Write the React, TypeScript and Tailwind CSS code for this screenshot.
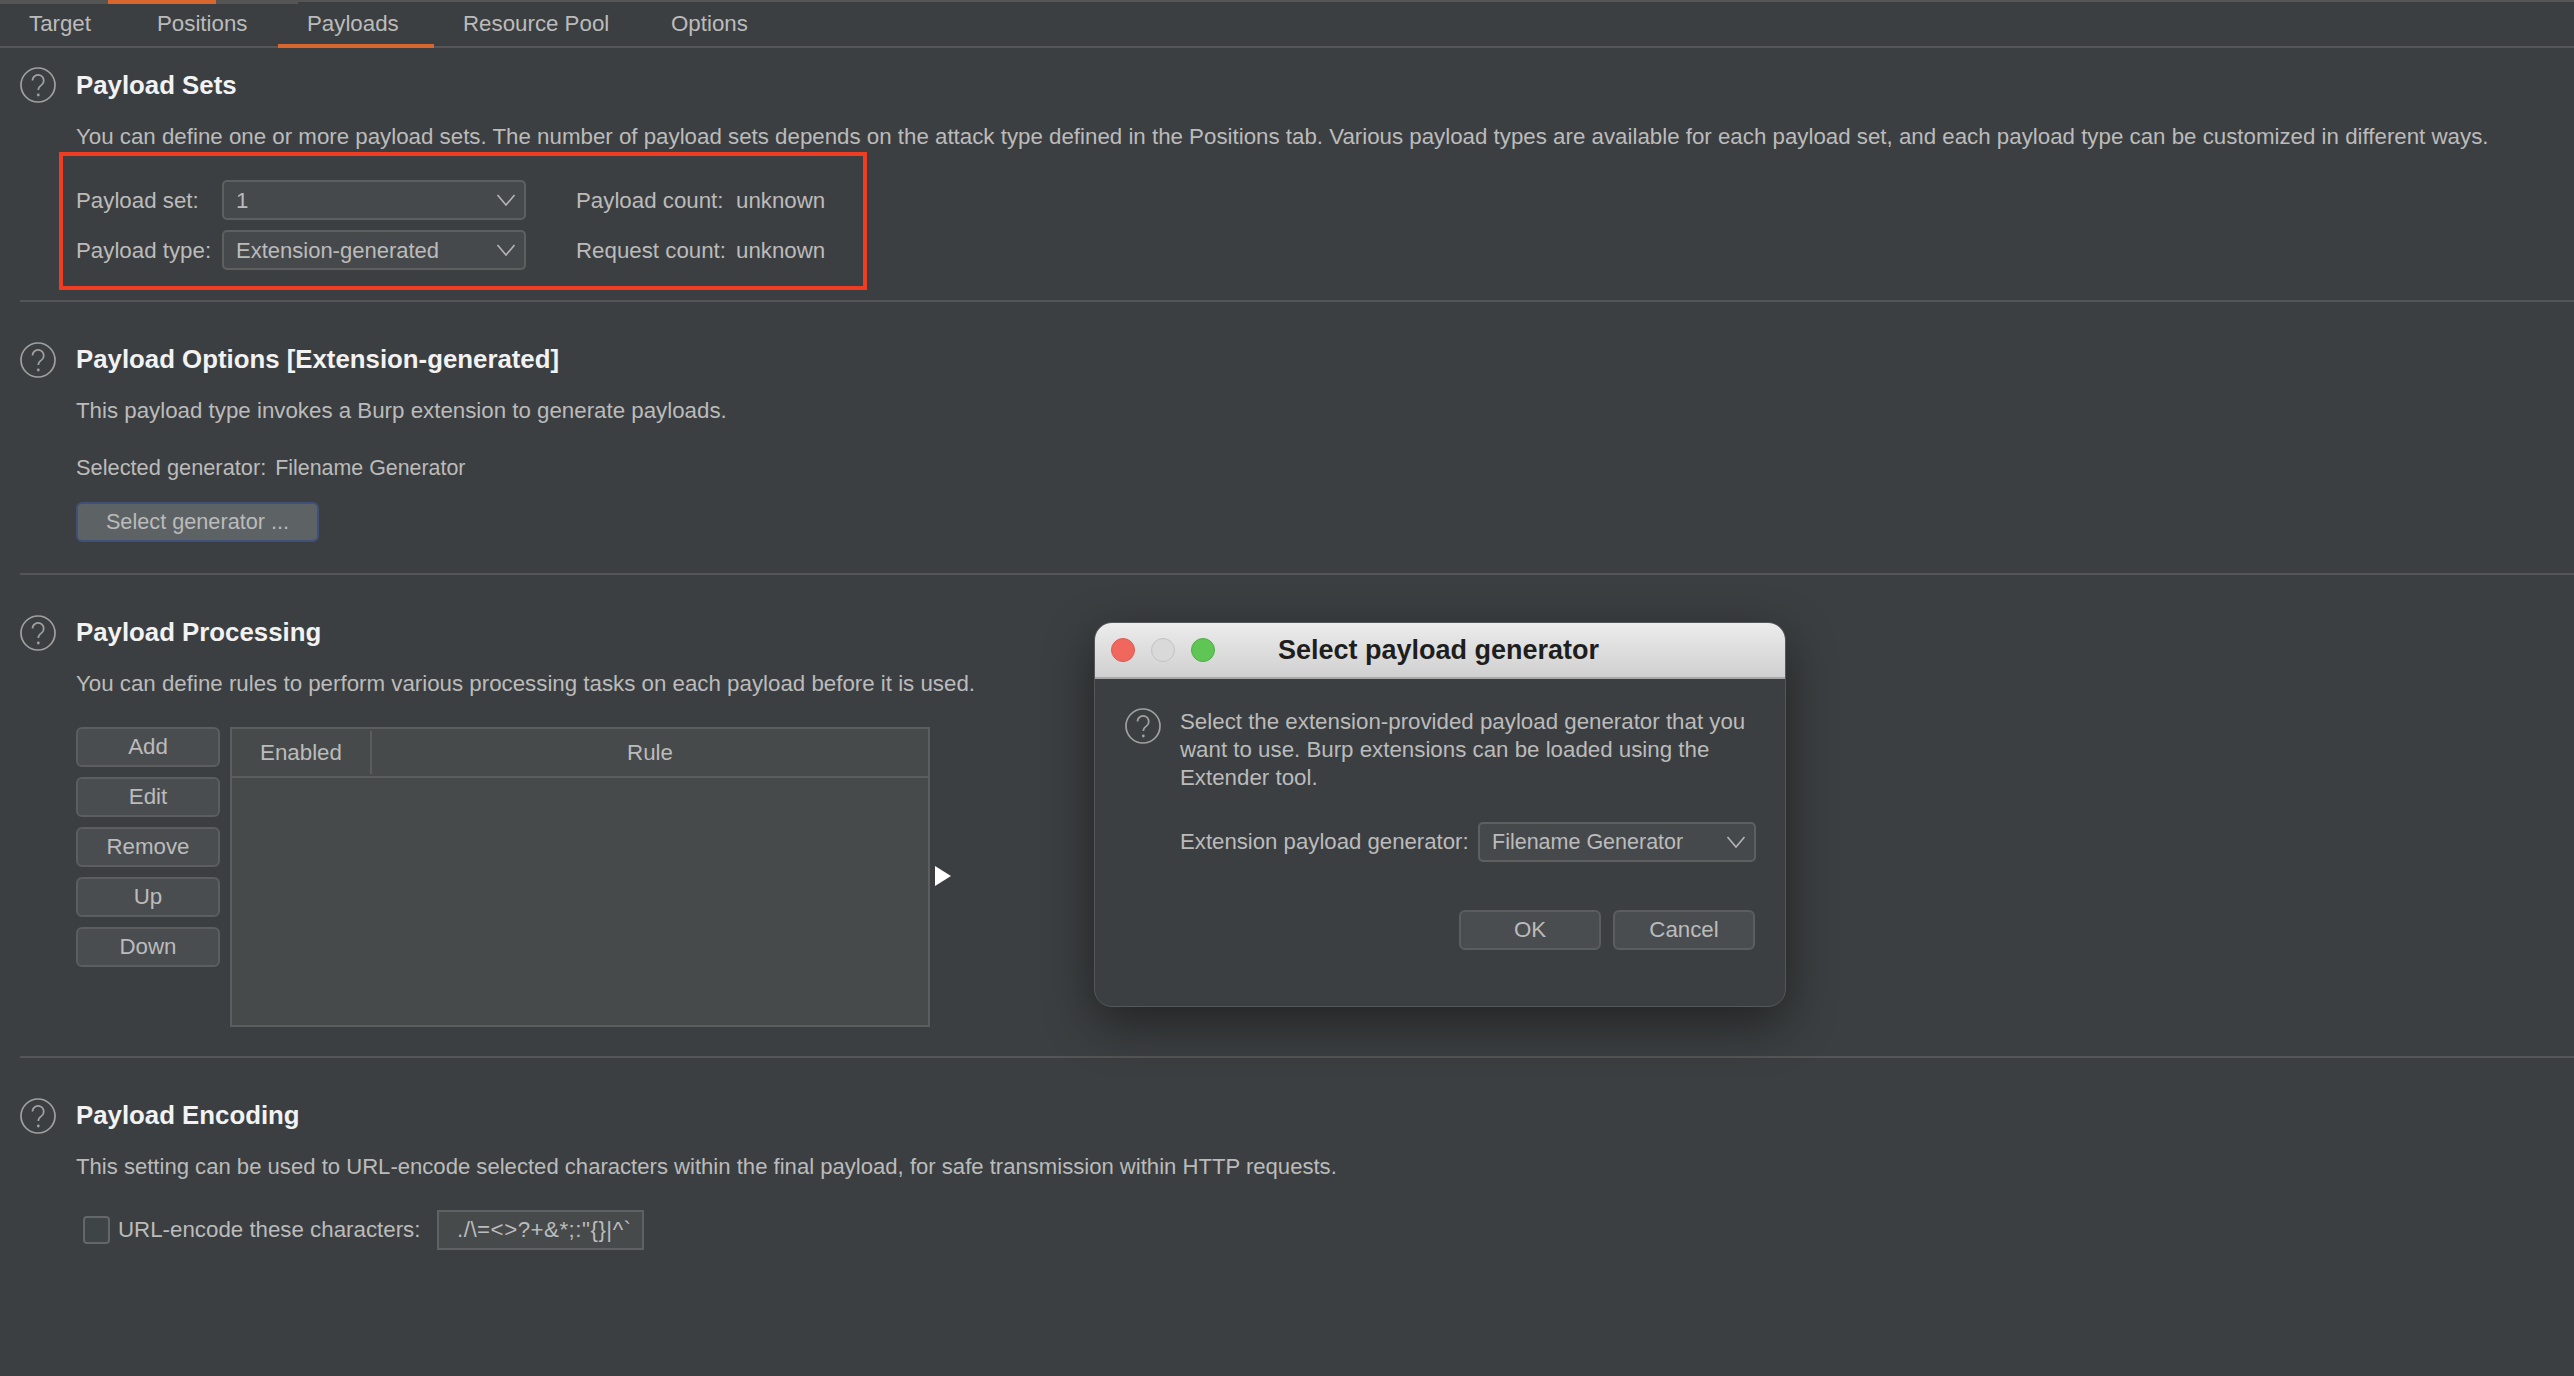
import React from 'react';

function HelpIcon() {
  return (
    <svg width="36" height="36" viewBox="0 0 36 36" fill="none" className="shrink-0">
      <circle cx="18" cy="18" r="17" stroke="#a0a0a0" strokeWidth="1.7" />
      <path d="M12.5 13.5a5.6 5.6 0 1 1 8.8 4.6c-2 1.3-3 2.4-3 5" stroke="#a0a0a0" strokeWidth="1.7" />
      <circle cx="18.3" cy="28" r="1.4" fill="#a0a0a0" />
    </svg>
  );
}

function Chevron() {
  return (
    <svg width="20" height="12" viewBox="0 0 20 12" fill="none" className="shrink-0">
      <path d="M1.5 1 10 11 18.5 1" stroke="#b4b4b4" strokeWidth="1.6" />
    </svg>
  );
}

function Select({ value, className, textClass = '' }: { value: string; className: string; textClass?: string }) {
  return (
    <div className={`h-10 flex items-center justify-between pl-[12px] pr-[8px] bg-[#46494b] border-2 border-[#5e6060] rounded-[5px] text-[#bbbbbb] ${className}`}>
      <span className={`pt-[1px] ${textClass}`}>{value}</span>
      <Chevron />
    </div>
  );
}

function Btn({ label, className = 'w-[144px]' }: { label: string; className?: string }) {
  return (
    <button className={`h-10 flex items-center justify-center bg-[#4a4d50] border-2 border-[#5b5d5e] rounded-[6px] text-[#bbbbbb] ${className}`}>
      {label}
    </button>
  );
}

function Heading({ title, textClass = 'pb-[2px]' }: { title: string; textClass?: string }) {
  return (
    <div className="flex items-center h-9 gap-[20px]">
      <HelpIcon />
      <h2 className={`text-[25.8px] font-bold text-[#f2f2f2] ${textClass}`}>{title}</h2>
    </div>
  );
}

function Divider() {
  return <div className="h-[2px] ml-[20px] bg-[#545556]" />;
}

const tabs = [
  { name: 'Target', w: 'w-[128px]' },
  { name: 'Positions', w: 'w-[150px]' },
  { name: 'Payloads', w: 'w-[156px]', active: true },
  { name: 'Resource Pool', w: 'w-[208px]' },
  { name: 'Options', w: 'w-[150px]' },
];

export default function App() {
  return (
    <div className="relative h-screen w-full overflow-hidden bg-[#3c3f41] text-[22.3px] text-[#bbbbbb] font-['Liberation_Sans',Arial,sans-serif]">
      {/* strip left over from the tab bar above */}
      <div className="flex h-[4px]">
        <div className="w-[108px] bg-[#555555]" />
        <div className="w-[108px] bg-[#d8672f]" />
        <div className="w-[82px] bg-[#555555]" />
        <div className="flex-1 border-t-2 border-[#555555]" />
      </div>

      <div className="flex h-[44px] border-b-2 border-[#545556]">
        {tabs.map((t) => (
          <div
            key={t.name}
            className={`${t.w} flex items-center pl-[29px] h-[44px] border-b-4 ${t.active ? 'border-[#d8672f]' : 'border-transparent'}`}
          >
            {t.name}
          </div>
        ))}
      </div>

      <div className="pl-[20px] pt-[19px] h-[252px]">
        <Heading title="Payload Sets" textClass="pb-0" />
        <p className="ml-[56px] mt-[19px] h-[30px] leading-[30px] whitespace-nowrap">
          You can define one or more payload sets. The number of payload sets depends on the attack type defined in the Positions tab. Various payload types are available for each payload set, and each payload type can be customized in different ways.
        </p>
        <div className="ml-[39px] w-[808px] h-[138px] border-4 border-[#ee3d23] pl-[13px] pt-[24px] flex flex-col gap-[10px]">
          <div className="flex items-center h-10">
            <span className="w-[146px] pt-[1px]">Payload set:</span>
            <Select value="1" className="w-[304px]" />
            <span className="ml-[50px] w-[160px] pt-[1px]">Payload count:</span>
            <span className="pt-[1px]">unknown</span>
          </div>
          <div className="flex items-center h-10">
            <span className="w-[146px] pt-[1px]">Payload type:</span>
            <Select value="Extension-generated" className="w-[304px]" textClass="text-[22px]" />
            <span className="ml-[50px] w-[160px] pt-[1px]">Request count:</span>
            <span className="pt-[1px]">unknown</span>
          </div>
        </div>
      </div>
      <Divider />

      <div className="pl-[20px] pt-[40px] h-[271px]">
        <Heading title="Payload Options [Extension-generated]" />
        <p className="ml-[56px] mt-[18px] h-[30px] leading-[30px]">This payload type invokes a Burp extension to generate payloads.</p>
        <p className="ml-[56px] mt-[27px] h-[30px] leading-[30px] text-[21.8px]">
          Selected generator:<span className="ml-[9px] text-[21.4px]">Filename Generator</span>
        </p>
        <div className="ml-[56px] mt-[19px]">
          <button className="h-10 w-[243px] pt-[1px] bg-[#5d6265] border-2 border-[#40507a] rounded-[6px] text-[21.7px] text-[#bbbbbb]">Select generator ...</button>
        </div>
      </div>
      <Divider />

      <div className="pl-[20px] pt-[40px] h-[481px]">
        <Heading title="Payload Processing" />
        <p className="ml-[56px] mt-[18px] h-[30px] leading-[30px]">You can define rules to perform various processing tasks on each payload before it is used.</p>
        <div className="ml-[56px] mt-[28px] flex gap-[10px]">
          <div className="flex flex-col gap-[10px]">
            {['Add', 'Edit', 'Remove', 'Up', 'Down'].map((b) => (
              <Btn key={b} label={b} />
            ))}
          </div>
          <div className="w-[700px] h-[300px] bg-[#474a4a] border-2 border-[#5b5d5e]">
            <div className="flex items-center h-[49px] border-b-2 border-[#5b5d5e]">
              <div className="w-[140px] h-[43px] flex items-center justify-center border-r-2 border-[#5b5d5e]">Enabled</div>
              <div className="flex-1 text-center">Rule</div>
            </div>
          </div>
        </div>
      </div>
      <Divider />

      <div className="pl-[20px] pt-[40px]">
        <Heading title="Payload Encoding" />
        <p className="ml-[56px] mt-[18px] h-[30px] leading-[30px] text-[22.1px]">This setting can be used to URL-encode selected characters within the final payload, for safe transmission within HTTP requests.</p>
        <div className="ml-[63px] mt-[28px] flex items-center h-10">
          <div className="w-[27px] h-[28px] bg-[#3f4446] border-2 border-[#63666a] rounded-[4px]" />
          <span className="ml-[8px] w-[319px]">URL-encode these characters:</span>
          <div className="w-[207px] h-10 flex items-center pl-[18px] tracking-[0.5px] bg-[#464a4b] border-2 border-[#5f6162]">./\=&lt;&gt;?+&amp;*;:"{'{}'}|^`</div>
        </div>
      </div>

      {/* mouse pointer, clipped by the dialog capture */}
      <svg width="18" height="20" viewBox="0 0 18 20" className="absolute left-[934px] top-[866px]">
        <path d="M1 0 17 10 1 20Z" fill="#ffffff" />
      </svg>

      {/* dialog */}
      <div className="absolute left-[1094px] top-[622px] w-[692px] h-[385px] rounded-[18px] overflow-hidden bg-[#3c3f41] border border-[#55585a] shadow-[0_16px_50px_rgba(0,0,0,0.45)]">
        <div className="h-[56px] flex items-center pl-[16px] gap-[16px] bg-linear-to-b from-[#ececec] to-[#d0d0d0] border-b-2 border-[#a8a8a8]">
          <span className="w-[24px] h-[24px] rounded-full bg-[#f0685d] border border-[#dc5a50]" />
          <span className="w-[24px] h-[24px] rounded-full bg-[#d9d9d9] border border-[#c2c2c2]" />
          <span className="w-[24px] h-[24px] rounded-full bg-[#5fc554] border border-[#52ad48]" />
          <span className="ml-[47px] text-[27px] font-bold text-[#1e1e1e]">Select payload generator</span>
        </div>
        <div className="flex gap-[19px] pl-[30px] pt-[29px]">
          <HelpIcon />
          <p className="w-[575px] leading-[28px]">
            Select the extension-provided payload generator that you want to use. Burp extensions can be loaded using the Extender tool.
          </p>
        </div>
        <div className="flex items-center ml-[85px] mt-[30px] h-10">
          <span className="w-[298px] text-[22.2px]">Extension payload generator:</span>
          <Select value="Filename Generator" className="w-[278px]" textClass="text-[21.5px]" />
        </div>
        <div className="flex justify-end gap-[12px] mt-[48px] pr-[30px]">
          <Btn label="OK" className="w-[142px]" />
          <Btn label="Cancel" className="w-[142px]" />
        </div>
      </div>
    </div>
  );
}
